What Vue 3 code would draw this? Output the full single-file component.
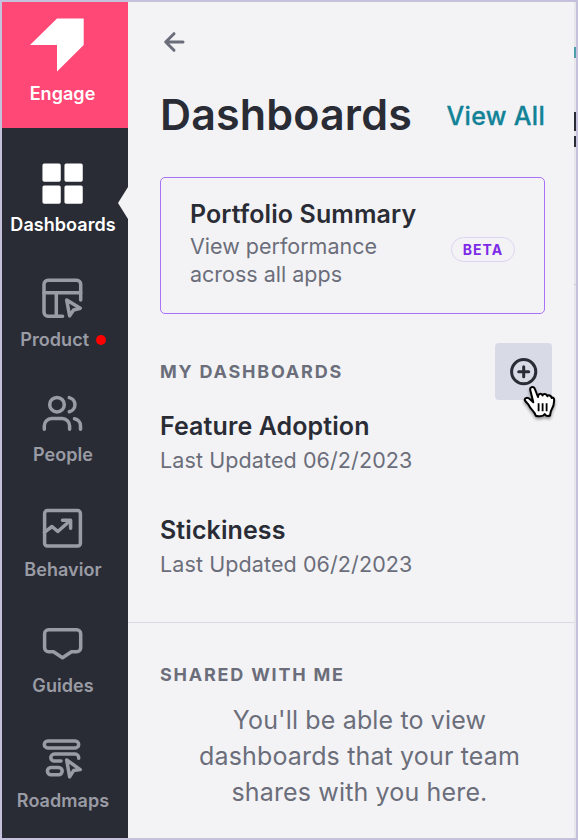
<template>
    <div class="frameBox">
        <nav class="sideBar">
            <div class="brandBlock">
                <svg class="brandIcon" viewBox="0 0 56 56">
                    <path d="M1 28 L28 1.5 H54.7 V28 L28 54.5 V28 Z" fill="#fff" />
                </svg>
                <span class="navLabel">Engage</span>
            </div>
            <div v-for="item in navItems" :key="item.name" class="navItem" :class="{ active: item.name === current }"
                @click="current = item.name">
                <svg class="navIcon" viewBox="0 0 44 44">
                    <path v-for="d in item.paths" :key="d" :d="d" />
                </svg>
                <span class="navLabel">{{ item.name }}<i v-if="item.dot" class="dotItem"></i></span>
            </div>
        </nav>

        <main class="panelBox">
            <svg class="backIcon" viewBox="0 0 24 24">
                <path d="M21 12H4M12 3.7L3.7 12L12 20.3" />
            </svg>

            <header class="titleRow">
                <h1>Dashboards</h1>
                <a class="viewAll">View All</a>
            </header>

            <section class="summaryCard">
                <div>
                    <h2>Portfolio Summary</h2>
                    <p>View performance<br />across all apps</p>
                </div>
                <span class="betaBadge">BETA</span>
            </section>

            <div class="sectionRow">
                <h3>MY DASHBOARDS</h3>
                <button class="addButton">
                    <svg class="plusIcon" viewBox="0 0 30 30">
                        <circle cx="14.7" cy="14.7" r="12.1" />
                        <path d="M14.7 9.7V19.7M9.7 14.7H19.7" />
                    </svg>
                    <svg class="handIcon" viewBox="0 0 34 38">
                        <path class="handShape"
                            d="M7.3 6.2C6.4 3.2 10.2 1.6 11.7 4.5L15 13C14.9 9.4 18.7 8.8 19.5 11.6C20 9.4 23.5 9.3 24.4 12.2C25.5 10.5 28.2 11.5 28.7 14C30 12.9 31.2 14.3 31.2 16.2C31.2 22 29.5 24.3 27.9 27L27 31.5C25 32.4 22.9 32 21.7 30C20.5 32.2 16.4 32.7 12.8 31.7C11.5 27 7.3 25.3 5.8 21.2C4.2 18.7 2.5 18 1.8 16.2C1.3 13.7 4.6 13 7 15.2L10.3 18.3Z" />
                        <path class="handLine" d="M15.6 19.3V27.2M19.6 19.3V27.2M23.6 19.3V27.2" />
                    </svg>
                </button>
            </div>

            <ul class="listBlock">
                <li v-for="d in dashboards" :key="d.title">
                    <strong>{{ d.title }}</strong>
                    <span>Last Updated {{ d.updated }}</span>
                </li>
            </ul>

            <section class="sharedBlock">
                <h3>SHARED WITH ME</h3>
                <p>You'll be able to view<br />dashboards that your team<br />shares with you here.</p>
            </section>
        </main>

        <!-- page behind the panel -->
        <aside class="edgeStrip">
            <i class="edgeLink"></i>
            <i class="edgeTitle"></i>
            <i class="edgeTitle small"></i>
            <i class="edgeRule"></i>
        </aside>
    </div>
</template>

<script setup>
import { ref } from 'vue'

const current = ref('Dashboards')

const navItems = [
    {
        name: 'Dashboards',
        paths: [
            'M3.2 3.2H18V18H3.2Z', 'M25.2 3.2H40V18H25.2Z', 'M3.2 25.2H18V40H3.2Z', 'M25.2 25.2H40V40H25.2Z'
        ]
    },
    {
        name: 'Product',
        dot: true,
        paths: [
            'M39.7 23V7.3a4 4 0 0 0-4-4H7a4 4 0 0 0-4 4V35.3a4 4 0 0 0 4 4H21.6',
            'M3 15.7H39.7M15.3 15.7V39.3',
            'M25.7 23L39.3 31.2L32.6 33L28.6 38.8Z'
        ]
    },
    {
        name: 'People',
        paths: [
            'M23.3 12.7a7.3 7.3 0 1 1-14.6 0a7.3 7.3 0 1 1 14.6 0Z',
            'M28.3 5.6a7.3 7.3 0 0 1 0 14.2',
            'M3.3 37.2V33.8a7.3 7.3 0 0 1 7.3-7.3H21.3a7.3 7.3 0 0 1 7.3 7.3V37.2',
            'M33.5 26.7a7.3 7.3 0 0 1 6 7.1V37.2'
        ]
    },
    {
        name: 'Behavior',
        paths: [
            'M6.4 3.6H36.6a2.8 2.8 0 0 1 2.8 2.8V36.3a2.8 2.8 0 0 1-2.8 2.8H6.4a2.8 2.8 0 0 1-2.8-2.8V6.4a2.8 2.8 0 0 1 2.8-2.8Z',
            'M3.4 25.3L11 19.5L16.8 24.5L29.3 13.5',
            'M21.5 13.2H29.6V21.3'
        ]
    },
    {
        name: 'Guides',
        paths: [
            'M7.6 6.7H35.7a4 4 0 0 1 4 4V24.7a4 4 0 0 1-4 4H30.5L21.5 34.7L12.5 28.7H7.6a4 4 0 0 1-4-4V10.7a4 4 0 0 1 4-4Z'
        ]
    },
    {
        name: 'Roadmaps',
        paths: [
            'M6.8 2.9H34.2a3.5 3.5 0 0 1 0 7H6.8a3.5 3.5 0 0 1 0-7Z',
            'M37.7 20.3V19.6a3.5 3.5 0 0 0-3.5-3.5H13.3a3.5 3.5 0 0 0 0 7H20',
            'M10 29.5H17.6a3.6 3.6 0 0 1 0 7.2H10a3.6 3.6 0 0 1 0-7.2Z',
            'M25.7 22L39.3 31.6L32.6 32.6L28.6 38.8Z'
        ]
    }
]

const dashboards = [
    { title: 'Feature Adoption', updated: '06/2/2023' },
    { title: 'Stickiness', updated: '06/2/2023' }
]
</script>

<style>
body {
    margin: 0;
}
</style>

<style scoped>
.frameBox {
    display: flex;
    box-sizing: border-box;
    width: 578px;
    height: 840px;
    border: 2px solid #c5c0dc;
    background: #f3f3f6;
    overflow: hidden;
    font-family: Inter, sans-serif;
    color: #2a2c35;
}

h1,
h2,
h3,
p,
ul {
    margin: 0;
    padding: 0;
}

/* sidebar */
.sideBar {
    width: 126px;
    flex: none;
    background: #2a2c35;
}

.brandBlock {
    box-sizing: border-box;
    height: 126px;
    padding: 15px 5px 0 0;
    background: #ff4876;
    color: #fff;
    display: flex;
    flex-direction: column;
    align-items: center;
}

.brandIcon {
    width: 56px;
    height: 56px;
    margin-right: 11px;
}

.brandBlock .navLabel {
    margin-top: 10px;
}

.navItem {
    position: relative;
    box-sizing: border-box;
    height: 115.15px;
    padding: 34px 4px 0 0;
    display: flex;
    flex-direction: column;
    align-items: center;
    color: #9a9ca5;
    cursor: pointer;
}

.navItem.active {
    color: #fff;
}

.navItem.active::after {
    content: '';
    position: absolute;
    right: 0;
    top: 59px;
    border: solid transparent;
    border-width: 16px 10px 16px 0;
    border-right-color: #f3f3f6;
}

.navIcon {
    width: 44px;
    height: 44px;
    fill: none;
    stroke: currentColor;
    stroke-width: 3.5;
    stroke-linecap: round;
    stroke-linejoin: round;
}

.navItem.active .navIcon {
    fill: currentColor;
}

.navLabel {
    display: flex;
    align-items: center;
    margin-top: 8px;
    font-size: 18px;
    line-height: 22px;
    font-weight: 600;
    letter-spacing: 0.05px;
    white-space: nowrap;
}

.dotItem {
    width: 10px;
    height: 10px;
    margin-left: 6.5px;
    border-radius: 50%;
    background: #f00;
}

/* panel */
.panelBox {
    width: 446px;
    flex: none;
    display: flex;
    flex-direction: column;
}

.backIcon {
    width: 24px;
    height: 24px;
    margin: 27.5px 0 0 34px;
    fill: none;
    stroke: #6b6e7a;
    stroke-width: 3;
    stroke-linecap: round;
    stroke-linejoin: round;
}

.titleRow {
    display: flex;
    justify-content: space-between;
    align-items: center;
    height: 52px;
    margin: 34.5px 29px 0 32px;
}

h1 {
    font-size: 43px;
    line-height: 52px;
    font-weight: 600;
    letter-spacing: 0.15px;
}

.viewAll {
    color: #128297;
    font-size: 25px;
    line-height: 30px;
    font-weight: 500;
    letter-spacing: 0.3px;
    -webkit-text-stroke: 0.3px #128297;
    padding-top: 4px;
}

.summaryCard {
    box-sizing: border-box;
    display: flex;
    justify-content: space-between;
    height: 137px;
    margin: 37px 29px 0 32px;
    padding: 21px 29px 0;
    border: 1px solid #a970f8;
    border-radius: 5px;
}

h2 {
    font-size: 25px;
    line-height: 30px;
    font-weight: 600;
    letter-spacing: 0.1px;
}

.summaryCard p {
    margin-top: 3px;
    font-size: 21.5px;
    line-height: 28px;
    color: #6b6e7a;
}

.betaBadge {
    box-sizing: border-box;
    height: 25px;
    width: 64px;
    margin-top: 38px;
    border: 1px solid #dfd3f3;
    border-radius: 13px;
    color: #7d2be6;
    font-size: 14px;
    line-height: 24px;
    font-weight: 700;
    letter-spacing: 1.1px;
    text-align: center;
}

.sectionRow {
    display: flex;
    justify-content: space-between;
    align-items: center;
    margin: 29px 22px 0 32px;
}

h3 {
    color: #6b6e7a;
    font-size: 18px;
    line-height: 22px;
    font-weight: 700;
    letter-spacing: 1.78px;
}

.addButton {
    position: relative;
    display: flex;
    align-items: center;
    justify-content: center;
    width: 57px;
    height: 57px;
    padding: 0;
    border: none;
    border-radius: 4px;
    background: #d8dbe5;
}

.plusIcon {
    width: 30px;
    height: 30px;
    fill: none;
    stroke: #2a2c35;
    stroke-width: 3;
    stroke-linecap: round;
}

/* pointer over the add button */
.handIcon {
    position: absolute;
    left: 28px;
    top: 41px;
    width: 34px;
    height: 38px;
    overflow: visible;
    filter: drop-shadow(0 2px 1.5px rgba(0, 0, 0, 0.4));
}

.handShape {
    fill: #fff;
    stroke: #000;
    stroke-width: 2;
    stroke-linejoin: round;
}

.handLine {
    fill: none;
    stroke: #000;
    stroke-width: 1.8;
}

.listBlock {
    height: 223px;
    box-sizing: border-box;
    padding: 11px 32px 0;
    list-style: none;
    border-bottom: 1px solid #d8d9e6;
}

.listBlock li {
    display: flex;
    flex-direction: column;
    height: 104px;
}

.listBlock strong {
    font-size: 25px;
    line-height: 30px;
    font-weight: 600;
    letter-spacing: 0.1px;
}

.listBlock span {
    margin-top: 5px;
    font-size: 21.5px;
    line-height: 28px;
    letter-spacing: 0.1px;
    color: #6b6e7a;
}

.sharedBlock {
    padding: 41px 15px 0 32px;
}

.sharedBlock p {
    margin-top: 16px;
    font-size: 25px;
    line-height: 36px;
    letter-spacing: 0.15px;
    text-align: center;
    color: #6b6e7a;
}

.edgeStrip {
    flex: 1;
    display: flex;
    flex-direction: column;
    background: #e6e6eb;
}

.edgeLink {
    height: 11px;
    margin-top: 45px;
    background: #4d9dab;
}

.edgeTitle {
    height: 19px;
    margin-top: 54px;
    background: #2a2c35;
}

.edgeTitle.small {
    height: 11px;
    margin-top: 5px;
}

.edgeRule {
    height: 1px;
    margin-top: 137px;
    background: #cdced6;
}
</style>
